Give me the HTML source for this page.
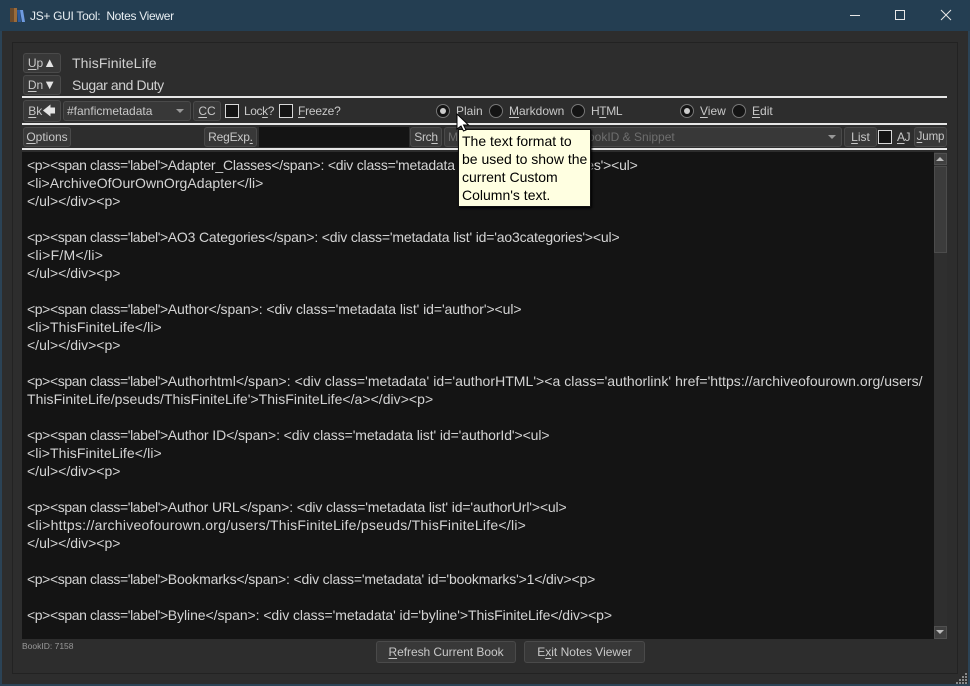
<!DOCTYPE html>
<html><head><meta charset="utf-8"><style>
html,body{margin:0;padding:0;background:#2d2d2d}
#w{position:relative;width:970px;height:686px;overflow:hidden;background:#2d2d2d;font-family:"Liberation Sans",sans-serif;font-size:12px;color:#c8c8c8}
#w div{position:absolute;box-sizing:border-box;white-space:nowrap}
.b{background:#383838;border:1px solid #4a4a4a;border-radius:3px;text-align:center;color:#c8c8c8;line-height:18px;height:20px}
.t{line-height:16px;height:16px}
.rule{left:22px;width:925px;height:2px;background:#e6e6e6}
.cb{width:14px;height:14px;background:#141414;border:1px solid #d8d8d8}
.r{width:14px;height:14px;border-radius:50%;background:#141414;border:1px solid #777}
.d{left:3px;top:3px;width:6px;height:6px;border-radius:50%;background:#ccc}
.a{color:#e4e4e4;font-size:13px}
u{text-decoration-thickness:1px;text-underline-offset:2px}
#txt div{left:27px;font-size:14px;line-height:18px;height:18px;color:#d4d4d4}
#txt span{letter-spacing:-.39px}
</style></head><body><div id="w">
<div style="left:0;top:0;width:970px;height:31px;background:#243e52"></div>
<svg style="position:absolute;left:10px;top:7px" width="15" height="16"><rect x="0" y="1" width="4" height="14" fill="#6b4a2c"/><rect x="4" y="1" width="3" height="14" fill="#9a6b3c"/><path d="M7 3h3l1 12H8z" fill="#2d5a9c"/><path d="M10 3l3 0 2 12-3 0z" fill="#6f9be0"/></svg>
<div class="t" style="left:30px;top:8px;color:#e8eef2;font-size:12px;letter-spacing:-.3px">JS+ GUI Tool:&nbsp; Notes Viewer</div>
<svg style="position:absolute;left:840px;top:0" width="130" height="31" fill="none" stroke="#e8e8e8" stroke-width="1"><path d="M10 15.500h10"/><rect x="55.500" y="10.500" width="9" height="9"/><path d="M101 10l10 10M111 10l-10 10"/></svg>
<div style="left:0;top:31px;width:2px;height:655px;background:#2b4356"></div>
<div style="left:968px;top:31px;width:2px;height:655px;background:#2b4356"></div>
<div style="left:0;top:684px;width:970px;height:2px;background:#2b4356"></div>
<div style="left:12px;top:42px;width:946px;height:632px;border:1px solid #222"></div>
<svg style="position:absolute;left:956px;top:672px" width="12" height="12" fill="#888"><rect x="9" y="1" width="2" height="2"/><rect x="6" y="4" width="2" height="2"/><rect x="9" y="4" width="2" height="2"/><rect x="3" y="7" width="2" height="2"/><rect x="6" y="7" width="2" height="2"/><rect x="9" y="7" width="2" height="2"/><rect x="0" y="10" width="2" height="2"/><rect x="3" y="10" width="2" height="2"/><rect x="6" y="10" width="2" height="2"/><rect x="9" y="10" width="2" height="2"/></svg>

<div class="b" style="left:23px;top:53px;width:38px;height:20px"><u>U</u>p<span class="a">▲</span></div>
<div class="b" style="left:23px;top:75px;width:38px;height:20px"><u>D</u>n<span class="a">▼</span></div>
<div class="t" style="left:72px;top:55px;font-size:14px;color:#d0d0d0;letter-spacing:.1px">ThisFiniteLife</div>
<div class="t" style="left:72px;top:77px;font-size:14px;color:#d0d0d0;letter-spacing:-.4px">Sugar and Duty</div>
<div class="rule" style="top:96px"></div>

<div class="b" style="left:23px;top:100px;width:38px;height:22px;line-height:20px"><u>B</u>k<span class="a">🡄</span></div>
<div class="b" style="left:63px;top:101px;width:128px;text-align:left;padding-left:3px">#fanficmetadata</div>
<div style="left:176px;top:109px;width:0;height:0;border-left:4px solid transparent;border-right:4px solid transparent;border-top:4px solid #999"></div>
<div class="b" style="left:193px;top:101px;width:28px"><u>C</u>C</div>
<div class="cb" style="left:225px;top:104px"></div>
<div class="t" style="left:244px;top:103px;letter-spacing:-.4px">Loc<u>k</u>?</div>
<div class="cb" style="left:279px;top:104px"></div>
<div class="t" style="left:298px;top:103px;letter-spacing:-.2px"><u>F</u>reeze?</div>
<div class="r" style="left:436px;top:104px"><div class="d"></div></div>
<div class="t" style="left:456px;top:103px">Plain</div>
<div class="r" style="left:489px;top:104px"></div>
<div class="t" style="left:509px;top:103px"><u>M</u>arkdown</div>
<div class="r" style="left:571px;top:104px"></div>
<div class="t" style="left:591px;top:103px;letter-spacing:-.4px">H<u>T</u>ML</div>
<div class="r" style="left:680px;top:104px"><div class="d"></div></div>
<div class="t" style="left:700px;top:103px"><u>V</u>iew</div>
<div class="r" style="left:732px;top:104px"></div>
<div class="t" style="left:752px;top:103px"><u>E</u>dit</div>
<div class="rule" style="top:123px"></div>

<div class="b" style="left:23px;top:127px;width:48px;height:20px"><u>O</u>ptions</div>
<div class="b" style="left:204px;top:127px;width:53px;height:20px;letter-spacing:-.2px">RegExp<u>.</u></div>
<div style="left:259px;top:127px;width:150px;height:20px;background:#141414"></div>
<div class="b" style="left:410px;top:127px;width:32px;height:20px;letter-spacing:-.3px">Src<u>h</u></div>
<div class="b" style="left:444px;top:127px;width:398px;height:20px;text-align:left;padding-left:3px;color:#6e6e6e">M<span style="position:absolute;left:135px;top:0">BookID &amp; Snippet</span></div>
<div style="left:828px;top:135px;width:0;height:0;border-left:4px solid transparent;border-right:4px solid transparent;border-top:4px solid #999"></div>
<div class="b" style="left:844px;top:127px;width:33px;height:20px"><u>L</u>ist</div>
<div class="cb" style="left:878px;top:130px"></div>
<div class="t" style="left:897px;top:129px;letter-spacing:-.5px"><u>A</u>J</div>
<div class="b" style="left:914px;top:127px;width:33px;height:20px;font-size:11.500px;letter-spacing:-.1px"><u>J</u>ump</div>
<div class="rule" style="top:148px"></div>

<div style="left:22px;top:152px;width:925px;height:487px;background:#141414"></div>
<div id="txt">
<div style="top:156px;letter-spacing:-.206px"><span>&lt;p&gt;&lt;span class='label'&gt;</span>Adapter_Classes&lt;/span&gt;: &lt;div class='metadata list' id='adapter_classes'&gt;&lt;ul&gt;</div>
<div style="top:174px;letter-spacing:.04px">&lt;li&gt;ArchiveOfOurOwnOrgAdapter&lt;/li&gt;</div>
<div style="top:192px">&lt;/ul&gt;&lt;/div&gt;&lt;p&gt;</div>
<div style="top:228px;letter-spacing:-.174px"><span>&lt;p&gt;&lt;span class='label'&gt;</span>AO3 Categories&lt;/span&gt;: &lt;div class='metadata list' id='ao3categories'&gt;&lt;ul&gt;</div>
<div style="top:246px;letter-spacing:.25px">&lt;li&gt;F/M&lt;/li&gt;</div>
<div style="top:264px">&lt;/ul&gt;&lt;/div&gt;&lt;p&gt;</div>
<div style="top:300px;letter-spacing:-.07px"><span>&lt;p&gt;&lt;span class='label'&gt;</span>Author&lt;/span&gt;: &lt;div class='metadata list' id='author'&gt;&lt;ul&gt;</div>
<div style="top:318px;letter-spacing:.11px">&lt;li&gt;ThisFiniteLife&lt;/li&gt;</div>
<div style="top:336px">&lt;/ul&gt;&lt;/div&gt;&lt;p&gt;</div>
<div style="top:372px;letter-spacing:.042px"><span>&lt;p&gt;&lt;span class='label'&gt;</span>Authorhtml&lt;/span&gt;: &lt;div class='metadata' id='authorHTML'&gt;&lt;a class='authorlink' href='https://archiveofourown.org/users/</div>
<div style="top:390px;letter-spacing:.036px">ThisFiniteLife/pseuds/ThisFiniteLife'&gt;ThisFiniteLife&lt;/a&gt;&lt;/div&gt;&lt;p&gt;</div>
<div style="top:426px;letter-spacing:-.09px"><span>&lt;p&gt;&lt;span class='label'&gt;</span>Author ID&lt;/span&gt;: &lt;div class='metadata list' id='authorId'&gt;&lt;ul&gt;</div>
<div style="top:444px;letter-spacing:.11px">&lt;li&gt;ThisFiniteLife&lt;/li&gt;</div>
<div style="top:462px">&lt;/ul&gt;&lt;/div&gt;&lt;p&gt;</div>
<div style="top:498px;letter-spacing:-.135px"><span>&lt;p&gt;&lt;span class='label'&gt;</span>Author URL&lt;/span&gt;: &lt;div class='metadata list' id='authorUrl'&gt;&lt;ul&gt;</div>
<div style="top:516px;letter-spacing:.25px">&lt;li&gt;https://archiveofourown.org/users/ThisFiniteLife/pseuds/ThisFiniteLife&lt;/li&gt;</div>
<div style="top:534px">&lt;/ul&gt;&lt;/div&gt;&lt;p&gt;</div>
<div style="top:570px;letter-spacing:-.15px"><span>&lt;p&gt;&lt;span class='label'&gt;</span>Bookmarks&lt;/span&gt;: &lt;div class='metadata' id='bookmarks'&gt;1&lt;/div&gt;&lt;p&gt;</div>
<div style="top:606px;letter-spacing:-.064px"><span>&lt;p&gt;&lt;span class='label'&gt;</span>Byline&lt;/span&gt;: &lt;div class='metadata' id='byline'&gt;ThisFiniteLife&lt;/div&gt;&lt;p&gt;</div>
</div>

<div style="left:934px;top:152px;width:13px;height:487px;background:#2f2f2f"></div>
<div style="left:934px;top:153px;width:13px;height:12px;background:#404040;border:1px solid #505050"></div>
<div style="left:936px;top:157px;width:0;height:0;border-left:4px solid transparent;border-right:4px solid transparent;border-bottom:4px solid #bbb"></div>
<div style="left:934px;top:166px;width:13px;height:87px;background:#3c3c3c;border:1px solid #4c4c4c"></div>
<div style="left:934px;top:626px;width:13px;height:13px;background:#404040;border:1px solid #505050"></div>
<div style="left:936px;top:630px;width:0;height:0;border-left:4px solid transparent;border-right:4px solid transparent;border-top:4px solid #bbb"></div>

<div class="t" style="left:22px;top:638px;font-size:8.500px;color:#999">BookID: 7158</div>
<div class="b" style="left:376px;top:641px;width:140px;height:22px;line-height:20px;letter-spacing:-.05px"><u>R</u>efresh Current Book</div>
<div class="b" style="left:524px;top:641px;width:121px;height:22px;line-height:20px"><span>E<u>x</u>it Notes Viewer</span></div>

<div style="left:458px;top:129px;width:133px;height:78px;background:#ffffe1;border:1px solid #111;padding:2px 3px;font-size:14px;line-height:18px;color:#000;white-space:nowrap;box-shadow:1px 1px 2px #000">The text format to<br>be used to show the<br>current Custom<br>Column's text.</div>
<svg style="position:absolute;left:456px;top:113px" width="14" height="20"><path d="M1 1v15l4-3 2.500 5 2.500-1-2.500-5h5z" fill="#fff" stroke="#000" stroke-width="1"/></svg>
</div></body></html>
